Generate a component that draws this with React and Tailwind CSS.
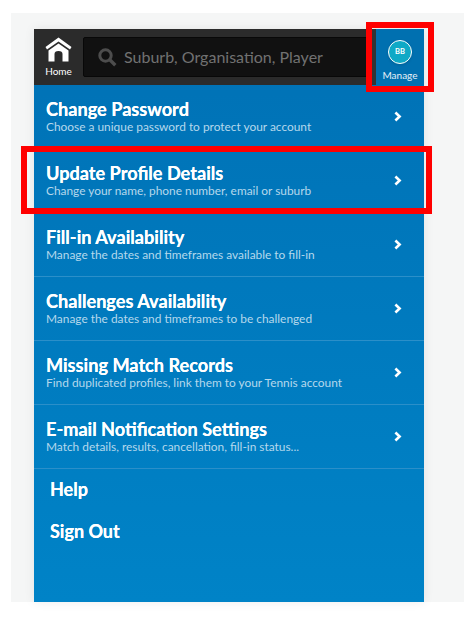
const items = [
    { title: 'Change Password', sub: 'Choose a unique password to protect your account' },
    { title: 'Update Profile Details', sub: 'Change your name, phone number, email or suburb' },
    { title: 'Fill-in Availability', sub: 'Manage the dates and timeframes available to fill-in' },
    { title: 'Challenges Availability', sub: 'Manage the dates and timeframes to be challenged' },
    { title: 'Missing Match Records', sub: 'Find duplicated profiles, link them to your Tennis account' },
    { title: 'E-mail Notification Settings', sub: 'Match details, results, cancellation, fill-in status...' },
];

const Chevron = () => (
    <svg className="ml-[1px]" width="9" height="11" viewBox="0 0 9 11" fill="none">
        <path d="M2.4 1.5 L6.6 5.5 L2.4 9.5" stroke="white" strokeWidth="2.6" />
    </svg>
);

const HomeIcon = () => (
    <svg width="27" height="25" viewBox="0 0 27 25">
        <path d="M13.5 0.5 L26.5 10 L25 12.5 L13.5 4.5 L2 12.5 L0.5 10 Z" fill="white" />
        <path d="M13.5 6.5 L23.5 13.5 L23.5 24.5 L17.5 24.5 L17.5 17 Q17.5 14 13.5 14 Q9.5 14 9.5 17 L9.5 24.5 L3.5 24.5 L3.5 13.5 Z" fill="white" />
    </svg>
);

const SearchIcon = () => (
    <svg width="19" height="19" viewBox="0 0 19 19" fill="none">
        <circle cx="7.5" cy="7.5" r="5.7" stroke="#4d4d4d" strokeWidth="3" />
        <path d="M11.8 11.8 L17.3 17.3" stroke="#4d4d4d" strokeWidth="3.4" />
    </svg>
);

export default function App() {
    return (
        <div className="relative w-[464px] h-[625px] bg-white overflow-hidden pt-[13px] pl-[11px] font-['Lato','Open_Sans',sans-serif]">
            <div className="w-[453px] h-[589px] bg-[#f5f6f6] pt-[16px] pl-[23px]">
                <div className="w-[390px] h-[573px] flex flex-col shadow-[0_0_10px_rgba(0,0,0,0.08)] bg-gradient-to-b from-[#0071b5] to-[#0083c7]">
                    {/* Top bar */}
                    <div className="h-[56px] shrink-0 flex bg-[#2b2b2b]">
                        <div className="w-[49px] shrink-0 flex flex-col items-center pt-[8px]">
                            <HomeIcon />
                            <span className="text-[10px] leading-[12px] text-white mt-[3px]">Home</span>
                        </div>
                        <div className="w-[289px] h-[40px] mt-[8px] flex items-center pl-[14px] gap-[7px] bg-[#111111] border border-[#080808] rounded-[2px]">
                            <SearchIcon />
                            <span className="text-[16px] text-[#717171] whitespace-nowrap">Suburb, Organisation, Player</span>
                        </div>
                        <div className="w-[4px] shrink-0 bg-[#333333]" />
                        <div className="flex-1 bg-[#0070b0] flex flex-col items-center pt-[11px]">
                            <div className="w-[24px] h-[24px] rounded-full bg-[#0fa9c6] border border-white flex items-center justify-center text-[7.5px] font-bold text-white shadow-sm">BB</div>
                            <span className="text-[10px] leading-[12px] text-[#e6f0f7] mt-[5px]">Manage</span>
                        </div>
                    </div>

                    {items.map(item => (
                        <div key={item.title} className="h-[64px] shrink-0 flex items-center justify-between pl-[12px] pr-[22px] border-b border-[#2b8fc9]">
                            <div className="pb-[1px]">
                                <div className="text-[18.15px] leading-[22px] font-bold text-white whitespace-nowrap [text-shadow:0_0_0.5px_white]">{item.title}</div>
                                <div className="text-[11.9px] leading-[14px] text-[#b5d8ec] whitespace-nowrap">{item.sub}</div>
                            </div>
                            <Chevron />
                        </div>
                    ))}

                    <div className="pl-[16px] pt-[9px]">
                        <div className="text-[18px] leading-[22px] font-bold text-white [text-shadow:0_0_0.5px_white]">Help</div>
                        <div className="text-[18px] leading-[22px] font-bold text-white mt-[20px] [text-shadow:0_0_0.5px_white]">Sign Out</div>
                    </div>
                </div>
            </div>

            {/* Red highlight boxes */}
            <div className="absolute left-[366px] top-[22px] w-[68px] h-[70px] border-[6px] border-[#ff0000]" />
            <div className="absolute left-[21px] top-[146px] w-[411px] h-[68px] border-[6px] border-[#ff0000]" />
        </div>
    );
}
